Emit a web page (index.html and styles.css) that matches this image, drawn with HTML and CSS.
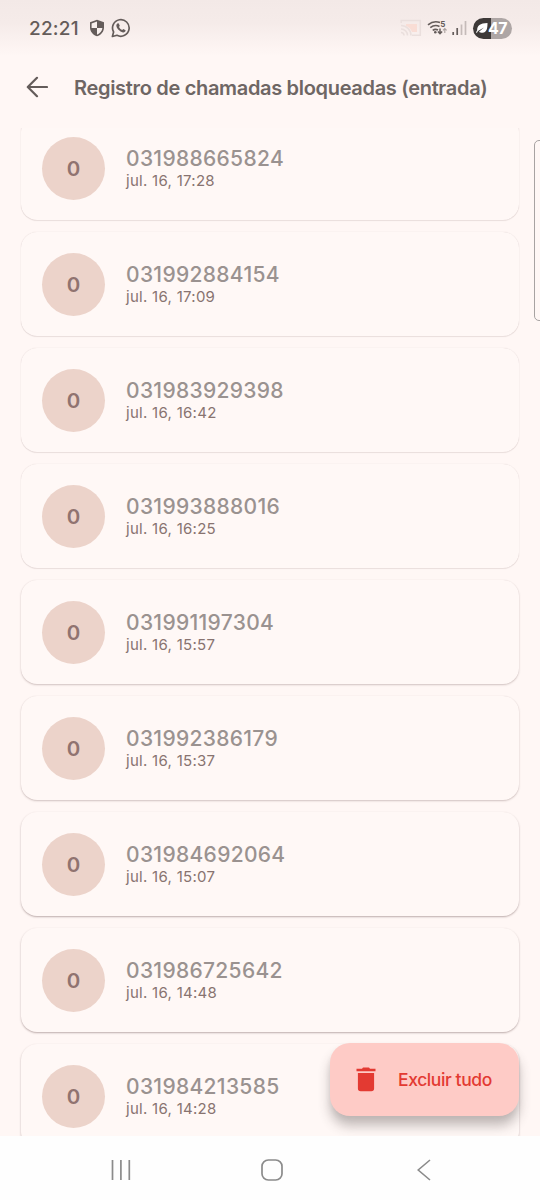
FILE: index.html
```
<!DOCTYPE html>
<html lang="pt-BR">
<head>
<meta charset="utf-8">
<title>Registro de chamadas bloqueadas</title>
<link rel="stylesheet" href="styles.css">
</head>
<body>
<div class="phone">
  <div class="status">
    <span class="clock">22:21</span>
    <svg class="shield" width="16" height="18" viewBox="0 0 16 18"><path d="M8 .8 15 3.2V8.500C15 12.500 12.200 15.900 8 17.300 3.800 15.900 1 12.500 1 8.500V3.200Z" fill="#645c5a"/><path d="M8 2.600 2.600 4.400V9H8ZM8 9H13.400C13 12 11 14.500 8 15.700Z" fill="#f7efed"/></svg>
    <svg class="whats" width="20" height="20" viewBox="0 0 20 20"><path d="M1.400 18.500 2.600 14A8.300 8.300 0 1 1 6 17.300Z" fill="none" stroke="#645c5a" stroke-width="1.700" stroke-linejoin="round"/><path d="M6.300 5.600 7.600 5.200 8.800 7.800 8 9C8.800 10.600 9.900 11.500 11.200 12L12.300 11 14.600 12.200C14.600 13.700 13.300 14.600 12 14.400 8.600 13.800 5.500 10.400 5.300 7.600 5.300 6.800 5.700 6.100 6.300 5.600Z" fill="#645c5a"/></svg>
    <div class="signals">
      <svg width="22" height="18" viewBox="0 0 22 18"><path d="M1.200 4V1.500H20.300V16.300H12" fill="none" stroke="#eadfdd" stroke-width="1.500"/><path d="M6 5H17V13H12Q10 8 6 7Z" fill="#f9ddd5"/><path d="M1 6.500A10 10 0 0 1 11 16.500M1 10A6.500 6.500 0 0 1 7.500 16.500M1 13.500A3 3 0 0 1 4 16.500" fill="none" stroke="#eadfdd" stroke-width="1.600"/></svg>
      <svg class="wifi" width="21" height="18" viewBox="0 0 21 18"><g fill="none" stroke="#645c5a" stroke-width="1.600"><path d="M1 5.800Q6.500 1.200 13 3.500M3.300 8.700Q7.500 5.200 12.500 7.400M5.700 11.300Q8.300 9.500 11 11"/></g><circle cx="8.300" cy="13.200" r="1.300" fill="#645c5a"/><path d="M13 9.500V14.500M10.900 12.500 13 14.700 15.100 12.500" fill="none" stroke="#645c5a" stroke-width="1.500"/><path d="M17.800 14V9.500M16 11.300 17.800 9.500 19.600 11.300" fill="none" stroke="#aaa19f" stroke-width="1.100"/><text x="13.300" y="8" class="band">5</text></svg>
      <svg class="cell" width="15" height="16" viewBox="0 0 15 16"><path d="M1.200 12V15" stroke="#645c5a" stroke-width="1.700"/><path d="M5.200 8V15" stroke="#645c5a" stroke-width="1.700"/><path d="M9.500 4.500V15M13.500 1V15" stroke="#c5bbb9" stroke-width="1.700"/></svg>
      <div class="battery"><svg width="12" height="12" viewBox="0 0 12 12"><path d="M11.500 1C11.500 7 10.500 10.500 6.500 10.700 5 10.700 3.700 10.400 3 9.700L8 5.500 2 8.900 .8 11 0 10.300 1.200 8.200C1 3.800 4 1.200 11.500 1Z" fill="#fff"/></svg><span>47</span></div>
    </div>
  </div>
  <header class="appbar">
    <svg width="22" height="22" viewBox="0 0 22 22"><path d="M21 11H2M11 1.800 1.800 11 11 20.200" fill="none" stroke="#645c5a" stroke-width="2.200" stroke-linecap="round" stroke-linejoin="round"/></svg>
    <h1>Registro de chamadas bloqueadas (entrada)</h1>
  </header>
  <main class="viewport">
    <ul class="calls">
      <li class="card"><span class="avatar">0</span><div class="info"><p class="number">031988665824</p><p class="date">jul. 16, 17:28</p></div></li>
      <li class="card"><span class="avatar">0</span><div class="info"><p class="number">031992884154</p><p class="date">jul. 16, 17:09</p></div></li>
      <li class="card"><span class="avatar">0</span><div class="info"><p class="number">031983929398</p><p class="date">jul. 16, 16:42</p></div></li>
      <li class="card"><span class="avatar">0</span><div class="info"><p class="number">031993888016</p><p class="date">jul. 16, 16:25</p></div></li>
      <li class="card mid"><span class="avatar">0</span><div class="info"><p class="number">031991197304</p><p class="date">jul. 16, 15:57</p></div></li>
      <li class="card mid"><span class="avatar">0</span><div class="info"><p class="number">031992386179</p><p class="date">jul. 16, 15:37</p></div></li>
      <li class="card low"><span class="avatar">0</span><div class="info"><p class="number">031984692064</p><p class="date">jul. 16, 15:07</p></div></li>
      <li class="card low"><span class="avatar">0</span><div class="info"><p class="number">031986725642</p><p class="date">jul. 16, 14:48</p></div></li>
      <li class="card low"><span class="avatar">0</span><div class="info"><p class="number">031984213585</p><p class="date">jul. 16, 14:28</p></div></li>
    </ul>
    <div class="edge-handle"></div>
    <button class="delete-all">
      <svg width="20" height="25" viewBox="0 0 20 25"><path d="M.5 1.700H6L7 .5H13L14 1.700H19.500V4.300H.5ZM1.900 6H18.100V21.500Q18.100 24.300 15.300 24.300H4.700Q1.900 24.300 1.900 21.500Z" fill="#e33a32"/></svg>
      <span>Excluir tudo</span>
    </button>
  </main>
  <nav class="navbar">
    <svg width="20" height="20" viewBox="0 0 20 20"><path d="M1.500 0V20M9.900 0V20M18.300 0V20" stroke="#8b8b8b" stroke-width="1.700"/></svg>
    <svg class="home" width="22" height="22" viewBox="0 0 22 22"><rect x="1" y="1" width="20" height="20" rx="6.300" fill="none" stroke="#8b8b8b" stroke-width="1.700"/></svg>
    <svg class="back" width="14" height="22" viewBox="0 0 14 22"><path d="M13 1 1.200 11 13 21" fill="none" stroke="#8b8b8b" stroke-width="1.600"/></svg>
  </nav>
</div>
</body>
</html>
```
FILE: styles.css
```
* { box-sizing: border-box; }
body { margin: 0; font-family: Inter, "Liberation Sans", sans-serif; background: #fff7f5; }
svg { display: block; flex: none; }
.phone { width: 540px; height: 1200px; display: flex; flex-direction: column; overflow: hidden; background: #fff7f5; }
.status { height: 56px; flex: none; display: flex; align-items: center; padding: 0 28px 0 29px; background: linear-gradient(#f3e9e7, #f5ebe9 40%, #fff7f5); }
.clock { width: 60px; font-size: 19px; font-weight: 500; letter-spacing: 0.2px; color: #645c5a; }
.whats { margin-left: 6px; }
.signals { margin-left: auto; display: flex; align-items: center; }
.wifi { margin-left: 5px; }
.band { font-size: 8px; font-weight: 700; fill: #645c5a; }
.cell { margin-left: 4px; }
.battery { margin-left: 6px; width: 39px; height: 21px; border-radius: 11px; padding-left: 3px; display: flex; align-items: center; background: linear-gradient(90deg, #3d3938 47%, #aea6a5 47%); color: #fff; font-size: 16px; font-weight: 700; letter-spacing: -0.6px; }
.appbar { height: 72px; flex: none; display: flex; align-items: center; padding: 0 0 10px 26px; gap: 26px; }
.appbar h1 { margin: 0; padding-top: 1px; font-size: 20px; line-height: 28px; font-weight: 600; letter-spacing: -0.32px; color: #6e6664; white-space: nowrap; }
.viewport { position: relative; flex: 1; min-height: 0; overflow: hidden; }
.calls { list-style: none; padding: 0 21px; margin: -12px 0 0; display: grid; gap: 12px; }
.card { height: 104px; border-radius: 16px; padding-left: 21px; display: flex; align-items: center; gap: 21px; background: #fff8f6; box-shadow: 0 0 1px rgba(80, 50, 50, .2), 0 1px 1px rgba(80, 50, 50, .1); }
.card.mid { box-shadow: 0 0 1px rgba(80, 50, 50, .1), 0 1px 2px rgba(80, 50, 50, .26); }
.card.low { box-shadow: 0 1px 2px rgba(80, 50, 50, .38); }
.avatar { width: 63px; height: 63px; border-radius: 50%; background: #ecd3ca; color: #907370; font-size: 20.500px; font-weight: 600; display: flex; align-items: center; justify-content: center; }
.info { padding-top: 2px; }
.card p { margin: 0; white-space: nowrap; }
.number { font-size: 21px; line-height: 24px; font-weight: 500; color: #9a9290; letter-spacing: 0.32px; }
.date { font-size: 15px; line-height: 20px; color: #887370; letter-spacing: 0.28px; }
.edge-handle { position: absolute; top: 12px; right: -5px; width: 11px; height: 181px; border: 1px solid #a8a3a2; border-radius: 5px; }
.delete-all { position: absolute; right: 21px; bottom: 20px; width: 189px; height: 73px; border: 0; border-radius: 20px; padding: 0 0 0 26px; display: flex; align-items: center; gap: 22px; background: #fecbc6; color: #e33a32; font-family: inherit; font-size: 17.500px; font-weight: 500; letter-spacing: -0.4px; white-space: nowrap; box-shadow: 0 10px 12px rgba(60, 50, 50, .3), 0 3px 5px rgba(60, 50, 50, .06); }
.navbar { height: 64px; flex: none; background: #fefefe; display: flex; align-items: center; padding: 4px 109px 0 111px; }
.home { margin-left: 130px; }
.back { margin-left: auto; }
```
